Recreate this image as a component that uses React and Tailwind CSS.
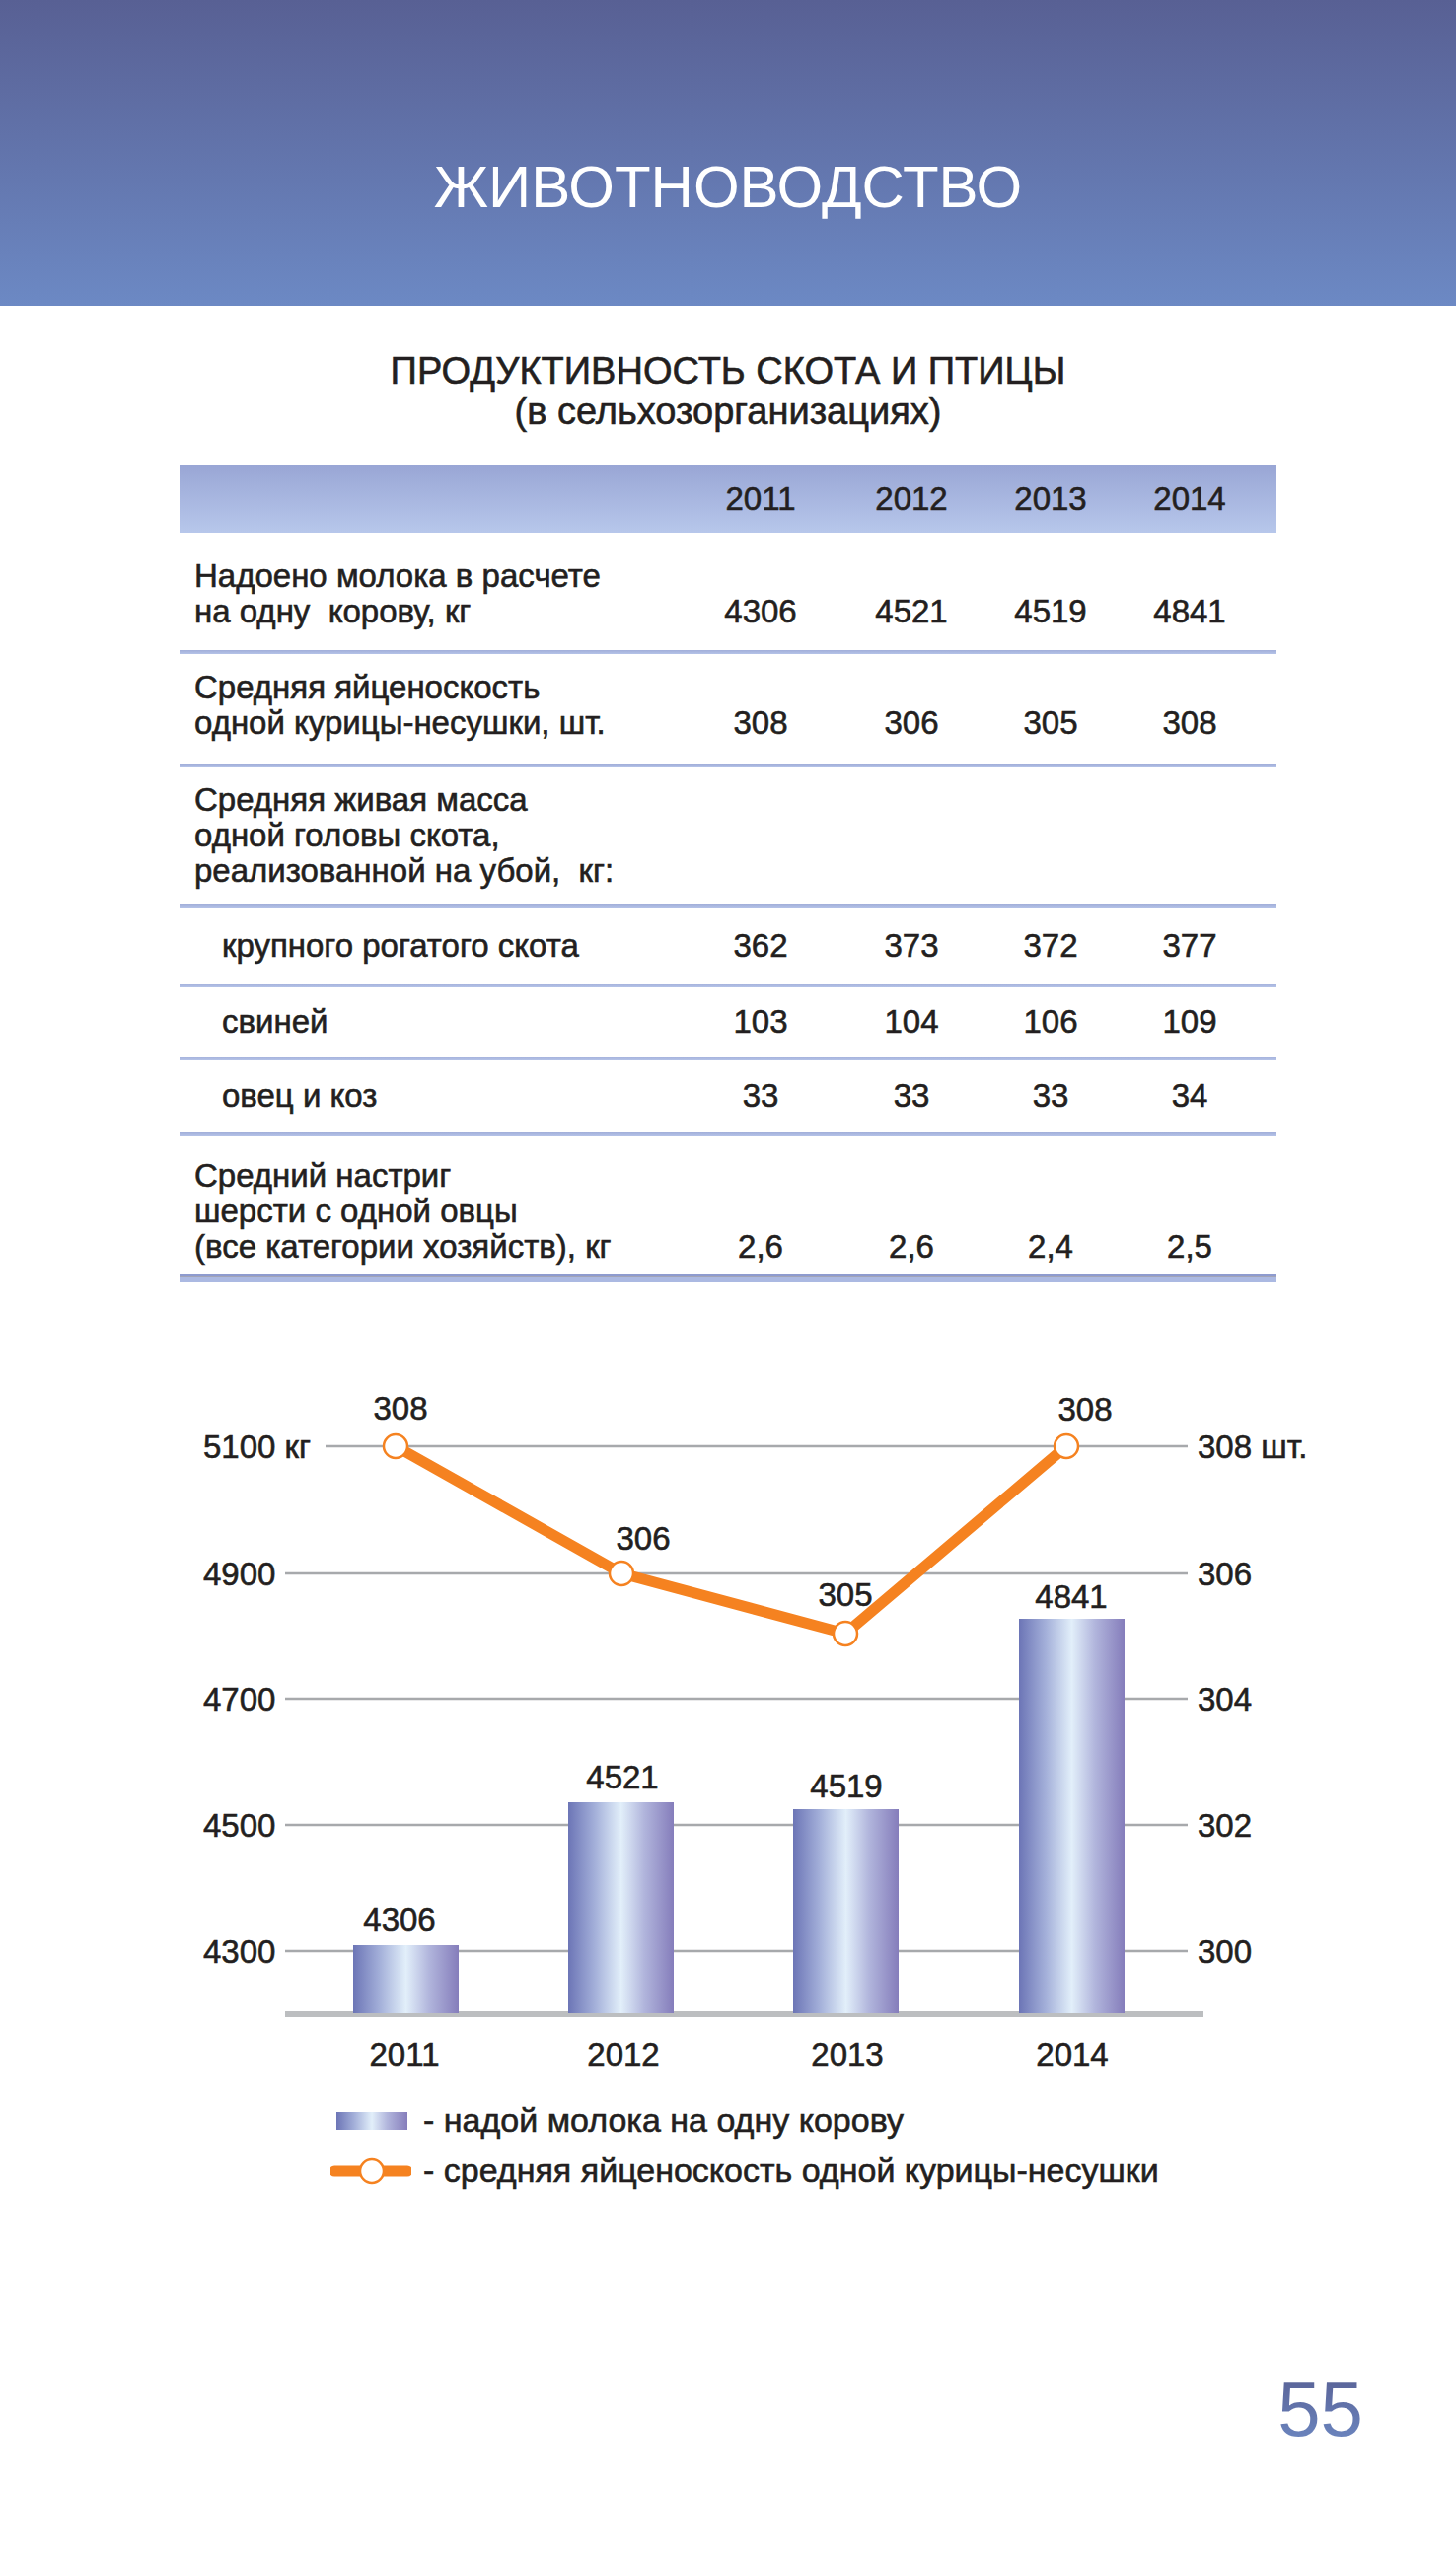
const rows = [
  { label: ['Надоено молока в расчете', 'на одну  корову, кг'], values: ['4306', '4521', '4519', '4841'], box: 'h-[119px] pt-[26px]', indent: 'pl-[15px]' },
  { label: ['Средняя яйценоскость', 'одной курицы-несушки, шт.'], values: ['308', '306', '305', '308'], box: 'h-[111px] pt-[16px]', indent: 'pl-[15px]' },
  { label: ['Средняя живая масса', 'одной головы скота,', 'реализованной на убой,  кг:'], values: [], box: 'h-[138px] pt-[15px]', indent: 'pl-[15px]' },
  { label: ['крупного рогатого скота'], values: ['362', '373', '372', '377'], box: 'h-[77px] pt-[21px]', indent: 'pl-[43px]' },
  { label: ['свиней'], values: ['103', '104', '106', '109'], box: 'h-[70px] pt-[17px]', indent: 'pl-[43px]' },
  { label: ['овец и коз'], values: ['33', '33', '33', '34'], box: 'h-[73px] pt-[18px]', indent: 'pl-[43px]' },
  { label: ['Средний настриг', 'шерсти с одной овцы', '(все категории хозяйств), кг'], values: ['2,6', '2,6', '2,4', '2,5'], box: 'h-[139px] pt-[22px]', indent: 'pl-[15px]' },
];

// value columns: widths chosen so the centres fall under the years
const colW = ['w-[156px]', 'w-[150px]', 'w-[132px]', 'w-[150px]'];

const Sep = () => <div className="h-[4px] bg-linear-to-b from-[#a1aed9] to-[#b5c3e8]" />;

const Row = ({ row, last }) => (
  <>
    <div className={row.box}>
      <div className="flex items-end">
        <div className={`w-[511px] shrink-0 ${row.indent}`}>
          {row.label.map((l, i) => (
            <div key={i} className="whitespace-pre">{l}</div>
          ))}
        </div>
        {row.values.map((v, i) => (
          <div key={i} className={`${colW[i]} shrink-0 text-center`}>{v}</div>
        ))}
      </div>
    </div>
    {!last && <Sep />}
  </>
);

const FONT = "'Liberation Sans', Arial, sans-serif";
const INK = '#231f20';
const ORANGE = '#f58220';

const grid = [
  { y: 1467, l: '5100 кг', r: '308 шт.', x0: 330 },
  { y: 1596, l: '4900', r: '306', x0: 289 },
  { y: 1723, l: '4700', r: '304', x0: 289 },
  { y: 1851, l: '4500', r: '302', x0: 289 },
  { y: 1979, l: '4300', r: '300', x0: 289 },
];

const bars = [
  { x: 358, top: 1973, v: '4306', lx: 405, ly: 1958, year: '2011', yx: 410 },
  { x: 576, top: 1828, v: '4521', lx: 631, ly: 1814, year: '2012', yx: 632 },
  { x: 804, top: 1835, v: '4519', lx: 858, ly: 1823, year: '2013', yx: 859 },
  { x: 1033, top: 1642, v: '4841', lx: 1086, ly: 1631, year: '2014', yx: 1087 },
];

const pts = [
  { x: 401, y: 1467, v: '308', lx: 406, ly: 1440 },
  { x: 630, y: 1596, v: '306', lx: 652, ly: 1572 },
  { x: 857, y: 1657, v: '305', lx: 857, ly: 1629 },
  { x: 1081, y: 1467, v: '308', lx: 1100, ly: 1441 },
];

const T = ({ children, ...p }) => (
  <text fontFamily={FONT} fontSize="33" fill={INK} stroke={INK} strokeWidth="0.6" {...p}>{children}</text>
);

const Chart = () => (
  <svg width="1476" height="730" viewBox="0 1380 1476 730" className="block">
    <defs>
      <linearGradient id="bar" x1="0" x2="1" y1="0" y2="0">
        <stop offset="0" stopColor="#6c75b6" />
        <stop offset="0.25" stopColor="#a3afd9" />
        <stop offset="0.5" stopColor="#e2effa" />
        <stop offset="0.72" stopColor="#b1b5dc" />
        <stop offset="1" stopColor="#857dbb" />
      </linearGradient>
    </defs>
    {grid.map((g) => (
      <g key={g.y}>
        <line x1={g.x0} x2="1204" y1={g.y} y2={g.y} stroke="#a7a9ac" strokeWidth="2.5" />
        <T x="206" y={g.y + 12}>{g.l}</T>
        <T x="1214" y={g.y + 12}>{g.r}</T>
      </g>
    ))}
    <rect x="289" y="2040" width="931" height="6" fill="#bcbec0" />
    {bars.map((b) => (
      <g key={b.year}>
        <rect x={b.x} y={b.top} width="107" height={2042 - b.top} fill="url(#bar)" />
        <T x={b.lx} y={b.ly} textAnchor="middle">{b.v}</T>
        <T x={b.yx} y="2095" textAnchor="middle">{b.year}</T>
      </g>
    ))}
    <polyline
      points={pts.map((p) => `${p.x},${p.y}`).join(' ')}
      fill="none"
      stroke={ORANGE}
      strokeWidth="11"
      strokeLinejoin="round"
    />
    {pts.map((p, i) => (
      <g key={i}>
        <circle cx={p.x} cy={p.y} r="12" fill="#fff" stroke={ORANGE} strokeWidth="2.5" />
        <T x={p.lx} y={p.ly} textAnchor="middle">{p.v}</T>
      </g>
    ))}
  </svg>
);

export default function App() {
  return (
    <div className="min-h-[2587px] w-[1476px] bg-white font-['Liberation_Sans',Arial,sans-serif] text-[#231f20]">
      {/* header */}
      <div className="h-[310px] bg-linear-to-b from-[#586094] to-[#6c89c4] pt-[160px] text-center text-[60px] leading-[60px] text-white">
        ЖИВОТНОВОДСТВО
      </div>

      <div className="[-webkit-text-stroke:0.6px_#231f20]">
        {/* title */}
        <div className="mt-[46px] text-center text-[38px] leading-[41px]">
          <div>ПРОДУКТИВНОСТЬ СКОТА И ПТИЦЫ</div>
          <div>(в сельхозорганизациях)</div>
        </div>

        {/* table */}
        <div className="mx-auto mt-[33px] w-[1112px] text-[33px] leading-[36px]">
          <div className="flex h-[69px] items-center bg-linear-to-b from-[#99a6d5] to-[#b7c7eb]">
            <div className="w-[511px] shrink-0" />
            {['2011', '2012', '2013', '2014'].map((y, i) => (
              <div key={y} className={`${colW[i]} shrink-0 text-center`}>{y}</div>
            ))}
          </div>
          {rows.map((r, i) => (
            <Row key={i} row={r} last={i === rows.length - 1} />
          ))}
          <div className="flex flex-col">
            <div className="h-[2px] bg-[#8e9bcf]" />
            <div className="h-[2px] bg-[#a3a4b6]" />
            <div className="h-[5px] bg-[#abb9e2]" />
          </div>
        </div>
      </div>

      {/* chart */}
      <div className="mt-[79px]">
        <Chart />
      </div>

      {/* legend */}
      <div className="mt-[15px] text-[34px] leading-[51px] [-webkit-text-stroke:0.6px_#231f20]">
        <div className="flex items-center">
          <div className="ml-[341px] h-[18px] w-[72px] bg-[linear-gradient(to_right,#6c75b6,#a3afd9_25%,#e2effa_50%,#b1b5dc_72%,#857dbb)]" />
          <span className="ml-[16px]">- надой молока на одну корову</span>
        </div>
        <div className="flex items-center">
          <svg width="82" height="28" viewBox="0 0 82 28" className="ml-[335px]">
            <line x1="4" x2="78" y1="14" y2="14" stroke={ORANGE} strokeWidth="11" strokeLinecap="round" />
            <circle cx="42" cy="14" r="12" fill="#fff" stroke={ORANGE} strokeWidth="2.5" />
          </svg>
          <span className="ml-[12px]">- средняя яйценоскость одной курицы-несушки</span>
        </div>
      </div>

      {/* page number */}
      <div className="mt-[177px] flex justify-end pr-[94px]">
        <span className="bg-linear-to-b from-[#586094] to-[#6d89c3] bg-clip-text text-[78px] leading-[78px] text-transparent">55</span>
      </div>
    </div>
  );
}
